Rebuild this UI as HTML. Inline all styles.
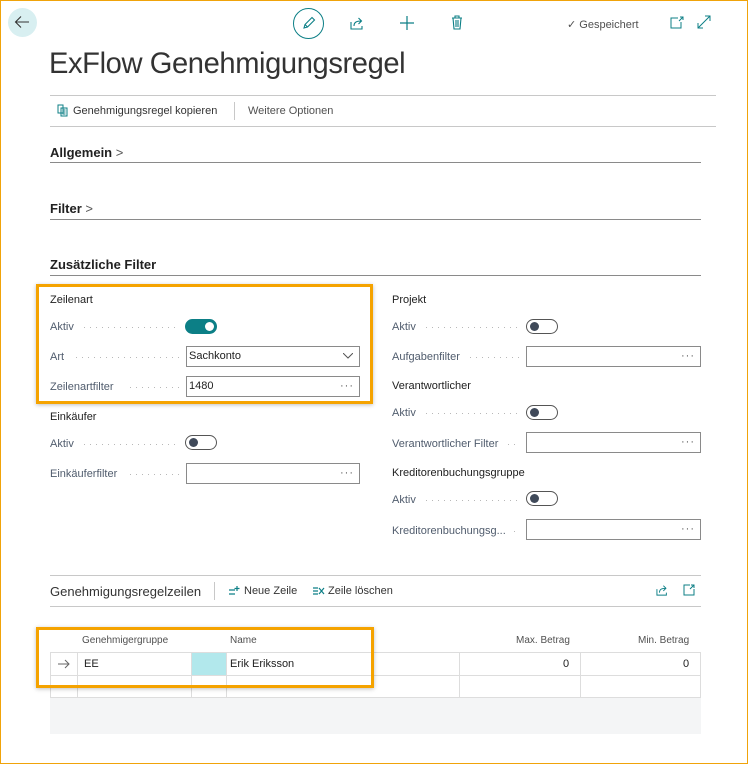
<!DOCTYPE html>
<html><head><meta charset="utf-8"><style>
*{margin:0;padding:0;box-sizing:border-box}
html,body{width:748px;height:764px;overflow:hidden;background:#fff}
body{position:relative;font-family:"Liberation Sans",sans-serif;color:#212121;font-size:11px}
.frame{position:absolute;left:0;top:0;width:748px;height:764px;border:1px solid #f0a30a}
.a{position:absolute;white-space:nowrap}
.ln{position:absolute;height:1px;background:#c8c8c8}
.lnd{position:absolute;height:1px;background:#8a8a8a}
.lbl{position:absolute;font-size:11px;color:#505c6d;white-space:nowrap;line-height:14px}
.dots{position:absolute;height:1px;background:repeating-linear-gradient(90deg,#b8b8b8 0 1px,transparent 1px 6px)}
.inp{position:absolute;height:21px;border:1px solid #8a8a8a;background:#fff;font-size:11px;line-height:19px;padding-left:2px;color:#212121}
.inp .e{position:absolute;right:5px;top:0;color:#555;letter-spacing:1px;line-height:19px}
.tg{position:absolute;width:32px;height:15px;border:1px solid #555;border-radius:8px;background:#fff}
.tg i{position:absolute;left:3px;top:2px;width:9px;height:9px;border-radius:50%;background:#404a5a}
.tg.on{background:#0c7f86;border-color:#0c7f86}
.tg.on i{left:19px;background:#fff}
.sec{position:absolute;font-size:13px;font-weight:bold;color:#212121;white-space:nowrap}
.grp{position:absolute;font-size:11px;color:#212121;white-space:nowrap}
.ob{position:absolute;border:3px solid #f5a300;box-shadow:0 1px 4px rgba(0,0,0,.25)}
</style></head><body>
<div class="frame"></div>

<div class="a" style="left:8px;top:8px;width:29px;height:29px;border-radius:50%;background:#d8eff1"></div>
<svg class="a" style="left:14px;top:15px" width="16" height="14" viewBox="0 0 16 14"><path d="M15 7H2M7 1.5L1.5 7 7 12.5" fill="none" stroke="#333" stroke-width="1.1"/></svg>
<div class="a" style="left:293px;top:8px;width:31px;height:31px;border-radius:50%;border:1.3px solid #0c7f86"></div>
<svg class="a" style="left:301px;top:16px" width="15" height="15" viewBox="0 0 15 15"><path d="M3 12l1-3.5 7-7 2.5 2.5-7 7zM4 8.5l2.5 2.5" fill="none" stroke="#0c7f86" stroke-width="1.1"/></svg>
<svg class="a" style="left:350px;top:16px" width="15" height="14" viewBox="0 0 15 14"><path d="M1 6v7h11V10M4 10c0-4 3-5 7-5M8.5 2l3 3-3 3" fill="none" stroke="#0c7f86" stroke-width="1.1"/></svg>
<svg class="a" style="left:400px;top:16px" width="14" height="14" viewBox="0 0 14 14"><path d="M7 0v14M0 7h14" stroke="#0c7f86" stroke-width="1.2"/></svg>
<svg class="a" style="left:451px;top:15px" width="12" height="15" viewBox="0 0 12 15"><path d="M1 3h10M4 3V1h4v2M2 3l1 11h6l1-11M5 5v7M7 5v7" fill="none" stroke="#0c7f86" stroke-width="1.1"/></svg>
<div class="a" style="left:567px;top:18px;font-size:11px;color:#505050">✓ Gespeichert</div>
<svg class="a" style="left:670px;top:16px" width="14" height="13" viewBox="0 0 14 13"><path d="M8 2H1v10h10V6M10 1l3 0 0 3M13 1l-4 4" fill="none" stroke="#0c7f86" stroke-width="1"/></svg>
<svg class="a" style="left:697px;top:15px" width="14" height="14" viewBox="0 0 14 14"><path d="M1 13L13 1M8 1h5v5M1 8v5h5" fill="none" stroke="#0c7f86" stroke-width="1"/></svg>

<div class="a" style="left:49px;top:47px;font-size:30px;color:#333;letter-spacing:-0.4px;transform:scaleX(0.97);transform-origin:left">ExFlow Genehmigungsregel</div>
<div class="ln" style="left:50px;top:95px;width:666px"></div>
<svg class="a" style="left:57px;top:104px" width="12" height="13" viewBox="0 0 12 13"><path d="M1 1h5v8H1zM4 4h6v8H4zM5.5 6h3M5.5 8h3M5.5 10h3" fill="none" stroke="#0c7f86" stroke-width="1"/></svg>
<div class="a" style="left:73px;top:105px;font-size:11px;color:#333">Genehmigungsregel kopieren</div>
<div class="a" style="left:234px;top:102px;width:1px;height:18px;background:#c8c8c8"></div>
<div class="a" style="left:248px;top:105px;font-size:11px;color:#505050">Weitere Optionen</div>
<div class="ln" style="left:50px;top:126px;width:666px"></div>

<div class="sec" style="left:50px;top:145px">Allgemein <span style="font-weight:normal;color:#555">&gt;</span></div>
<div class="lnd" style="left:50px;top:162px;width:651px"></div>
<div class="sec" style="left:50px;top:201px">Filter <span style="font-weight:normal;color:#555">&gt;</span></div>
<div class="lnd" style="left:50px;top:219px;width:651px"></div>
<div class="sec" style="left:50px;top:257px">Zusätzliche Filter</div>
<div class="lnd" style="left:50px;top:275px;width:651px"></div>

<div class="grp" style="left:50px;top:294px">Zeilenart</div>
<div class="lbl" style="left:50px;top:320px">Aktiv</div><div class="dots" style="left:84px;top:327px;width:96px"></div>
<div class="tg on" style="left:185px;top:319px"><i></i></div>
<div class="lbl" style="left:50px;top:350px">Art</div><div class="dots" style="left:76px;top:357px;width:104px"></div>
<div class="inp" style="left:186px;top:346px;width:174px">Sachkonto<svg style="position:absolute;right:6px;top:6px" width="10" height="6" viewBox="0 0 10 6"><path d="M0 0l5 5 5-5" fill="none" stroke="#555"/></svg></div>
<div class="lbl" style="left:50px;top:380px">Zeilenartfilter</div><div class="dots" style="left:130px;top:387px;width:50px"></div>
<div class="inp" style="left:186px;top:376px;width:174px">1480<span class="e">···</span></div>
<div class="ob" style="left:36px;top:284px;width:337px;height:120px"></div>

<div class="grp" style="left:50px;top:411px">Einkäufer</div>
<div class="lbl" style="left:50px;top:437px">Aktiv</div><div class="dots" style="left:84px;top:444px;width:96px"></div>
<div class="tg" style="left:185px;top:435px"><i></i></div>
<div class="lbl" style="left:50px;top:467px">Einkäuferfilter</div><div class="dots" style="left:130px;top:474px;width:50px"></div>
<div class="inp" style="left:186px;top:463px;width:174px"><span class="e">···</span></div>

<div class="grp" style="left:392px;top:294px">Projekt</div>
<div class="lbl" style="left:392px;top:320px">Aktiv</div><div class="dots" style="left:426px;top:327px;width:94px"></div>
<div class="tg" style="left:526px;top:319px"><i></i></div>
<div class="lbl" style="left:392px;top:350px">Aufgabenfilter</div><div class="dots" style="left:470px;top:357px;width:50px"></div>
<div class="inp" style="left:526px;top:346px;width:175px"><span class="e">···</span></div>
<div class="grp" style="left:392px;top:380px">Verantwortlicher</div>
<div class="lbl" style="left:392px;top:406px">Aktiv</div><div class="dots" style="left:426px;top:413px;width:94px"></div>
<div class="tg" style="left:526px;top:405px"><i></i></div>
<div class="lbl" style="left:392px;top:437px">Verantwortlicher Filter</div><div class="dots" style="left:508px;top:444px;width:12px"></div>
<div class="inp" style="left:526px;top:432px;width:175px"><span class="e">···</span></div>
<div class="grp" style="left:392px;top:467px">Kreditorenbuchungsgruppe</div>
<div class="lbl" style="left:392px;top:493px">Aktiv</div><div class="dots" style="left:426px;top:500px;width:94px"></div>
<div class="tg" style="left:526px;top:491px"><i></i></div>
<div class="lbl" style="left:392px;top:524px">Kreditorenbuchungsg...</div><div class="dots" style="left:514px;top:531px;width:6px"></div>
<div class="inp" style="left:526px;top:519px;width:175px"><span class="e">···</span></div>

<div class="ln" style="left:50px;top:575px;width:651px"></div>
<div class="a" style="left:50px;top:584px;font-size:13px;color:#333">Genehmigungsregelzeilen</div>
<div class="a" style="left:214px;top:582px;width:1px;height:18px;background:#c8c8c8"></div>
<svg class="a" style="left:228px;top:585px" width="14" height="12" viewBox="0 0 14 12"><path d="M1 5h6M1 9h6M9 1v5M6.5 3.5h5" stroke="#0c7f86" stroke-width="1.2"/></svg>
<div class="a" style="left:244px;top:585px;font-size:11px;color:#333">Neue Zeile</div>
<svg class="a" style="left:312px;top:585px" width="13" height="12" viewBox="0 0 13 12"><path d="M1 3h5M1 6h5M1 9h5M7 3l5 6M12 3l-5 6" stroke="#0c7f86" stroke-width="1.2"/></svg>
<div class="a" style="left:328px;top:585px;font-size:11px;color:#333">Zeile löschen</div>
<svg class="a" style="left:656px;top:584px" width="13" height="12" viewBox="0 0 15 14"><path d="M1 6v7h11V10M4 10c0-4 3-5 7-5M8.5 2l3 3-3 3" fill="none" stroke="#0c7f86" stroke-width="1.1"/></svg>
<svg class="a" style="left:683px;top:584px" width="12" height="12" viewBox="0 0 12 12"><path d="M7 1H1v10h10V5M7 5l4-4M8 1h3v3" fill="none" stroke="#0c7f86" stroke-width="1"/></svg>
<div class="ln" style="left:50px;top:606px;width:651px"></div>

<div class="a" style="left:82px;top:635px;font-size:10px;color:#505050">Genehmigergruppe</div>
<div class="a" style="left:230px;top:635px;font-size:10px;color:#505050">Name</div>
<div class="a" style="left:516px;top:635px;font-size:10px;color:#505050">Max. Betrag</div>
<div class="a" style="left:638px;top:635px;font-size:10px;color:#505050">Min. Betrag</div>

<div class="a" style="left:50px;top:697px;width:651px;height:37px;background:#f4f5f6"></div>
<div class="a" style="left:50px;top:652px;width:651px;height:46px;border:1px solid #ddd;border-bottom:none"></div>
<div class="a" style="left:50px;top:675px;width:651px;height:1px;background:#ddd"></div>
<div class="a" style="left:50px;top:697px;width:651px;height:1px;background:#ddd"></div>
<div class="a" style="left:77px;top:652px;width:1px;height:46px;background:#ddd"></div>
<div class="a" style="left:191px;top:652px;width:1px;height:46px;background:#ddd"></div>
<div class="a" style="left:192px;top:653px;width:34px;height:22px;background:#b2e8ec"></div>
<div class="a" style="left:226px;top:652px;width:1px;height:46px;background:#ddd"></div>
<div class="a" style="left:459px;top:652px;width:1px;height:46px;background:#ddd"></div>
<div class="a" style="left:580px;top:652px;width:1px;height:46px;background:#ddd"></div>
<svg class="a" style="left:58px;top:659px" width="12" height="10" viewBox="0 0 12 10"><path d="M0 5h11M7 1l4 4-4 4" fill="none" stroke="#666"/></svg>
<div class="a" style="left:84px;top:658px;font-size:11px">EE</div>
<div class="a" style="left:230px;top:658px;font-size:11px">Erik Eriksson</div>
<div class="a" style="left:563px;top:658px;font-size:11px">0</div>
<div class="a" style="left:683px;top:658px;font-size:11px">0</div>
<div class="ob" style="left:36px;top:627px;width:338px;height:61px"></div>
</body></html>
